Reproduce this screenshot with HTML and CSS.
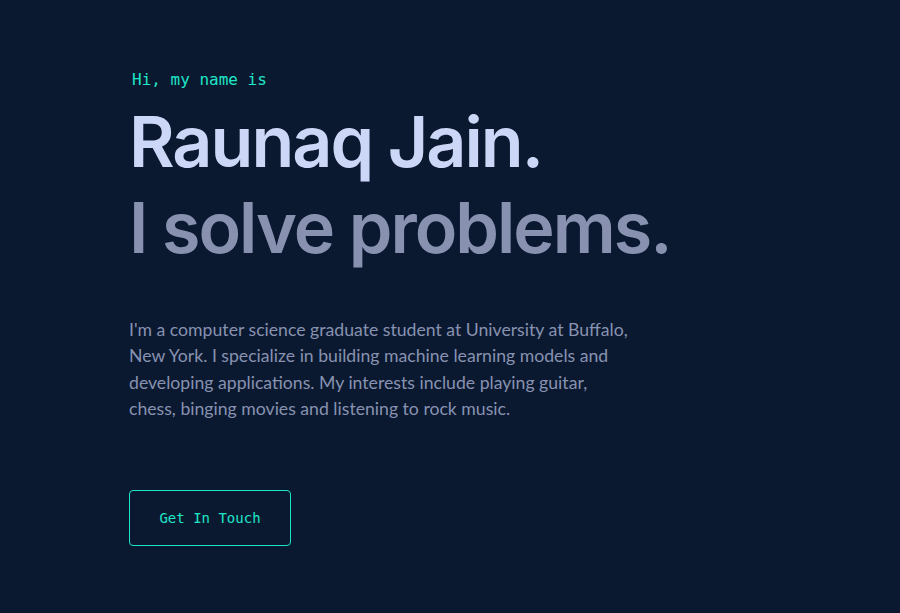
FILE: index.html
```html
<!DOCTYPE html>
<html lang="en">
<head>
<meta charset="utf-8">
<title>Raunaq Jain</title>
<link rel="stylesheet" href="styles.css">
</head>
<body>
<main class="hero">
  <h1 class="intro">Hi, my name is</h1>
  <h2 class="name">Raunaq Jain.</h2>
  <h3 class="tagline">I solve problems.</h3>
  <p class="bio">I'm a computer science graduate student at University at Buffalo, New York. I specialize in building machine learning models and developing applications. My interests include playing guitar, chess, binging movies and listening to rock music.</p>
  <a class="cta" href="#contact">Get In Touch</a>
</main>
</body>
</html>
```
FILE: styles.css
```css
html, body {
  margin: 0;
  padding: 0;
  background: #0a1930;
  height: 100%;
}
body {
  font-family: Lato, "Liberation Sans", sans-serif;
}
.hero {
  display: flex;
  flex-direction: column;
  align-items: flex-start;
  padding: 70px 0 0 129px;
}
.intro {
  margin: 0 0 10px 3px;
  font-family: "DejaVu Sans Mono", monospace;
  font-weight: 400;
  font-size: 16px;
  color: #1fe5c7;
}
.name, .tagline {
  margin: 0;
  font-family: Inter, sans-serif;
  font-weight: 600;
  font-size: 70px;
  line-height: 86px;
  letter-spacing: -2px;
}
.name { color: #ccd6f6; }
.tagline { color: #8892b0; }
.bio {
  margin: 46px 0 0;
  max-width: 505px;
  font-size: 17.65px;
  line-height: 26.3px;
  color: #8892b0;
}
.cta {
  margin-top: 68px;
  width: 160px;
  height: 54px;
  display: flex;
  align-items: center;
  justify-content: center;
  border: 1px solid #1fe5c7;
  border-radius: 4px;
  font-family: "DejaVu Sans Mono", monospace;
  font-size: 14px;
  color: #1fe5c7;
  text-decoration: none;
}
```
